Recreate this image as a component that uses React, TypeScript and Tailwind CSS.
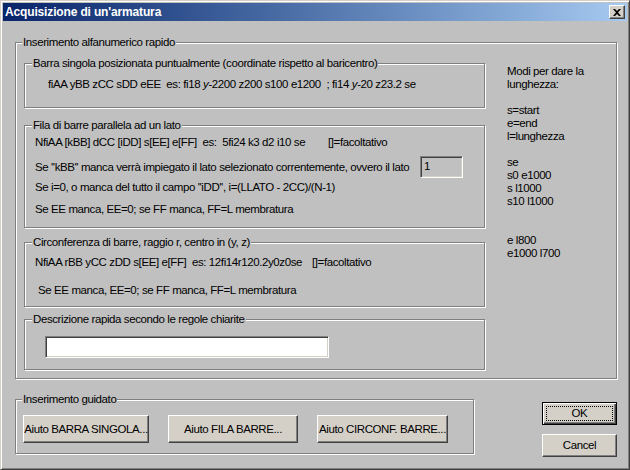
import React from "react";

const etched =
  "relative border border-[#808080] shadow-[1px_1px_0_#fff,inset_1px_1px_0_#fff]";
const raised =
  "border border-t-white border-l-white border-r-[#404040] border-b-[#404040] shadow-[inset_-1px_-1px_0_#808080] bg-[#d4d0c8]";
const sunken =
  "border border-t-[#808080] border-l-[#808080] border-r-white border-b-white shadow-[inset_1px_1px_0_#404040,inset_-1px_-1px_0_#d4d0c8]";

function Label({ children, left }: { children: React.ReactNode; left: string }) {
  return (
    <span
      className={`absolute top-[-8px] ${left} px-[1px] bg-[#c0c0c0] leading-[14px] whitespace-nowrap`}
    >
      {children}
    </span>
  );
}

function Line({ children, className = "" }: { children: React.ReactNode; className?: string }) {
  return <div className={`leading-[13px] h-[13px] whitespace-pre ${className}`}>{children}</div>;
}

export default function App() {
  const right = [
    "Modi per dare la",
    "lunghezza:",
    "",
    "s=start",
    "e=end",
    "l=lunghezza",
    "",
    "se",
    "s0 e1000",
    "s l1000",
    "s10 l1000",
    "",
    "",
    "e l800",
    "e1000 l700",
  ];
  return (
    <div className="w-[630px] h-[470px] bg-[#c0c0c0] border border-t-[#d4d0c8] border-l-[#d4d0c8] border-r-[#404040] border-b-[#404040] shadow-[inset_1px_1px_0_#fff,inset_-1px_-1px_0_#808080] p-[2px] flex flex-col text-black text-[11.5px] tracking-[-0.4px] font-['Liberation_Sans',Arial,sans-serif] overflow-hidden">
      {/* Title bar */}
      <div className="h-[18px] shrink-0 flex items-center justify-between bg-linear-to-r from-[#0a246a] to-[#a6caf0] pl-[2px] pr-[2px]">
        <span className="text-white font-bold text-[12px] tracking-[-0.15px] leading-[18px]">
          Acquisizione di un'armatura
        </span>
        <div className={`w-[16px] h-[14px] flex items-center justify-center ${raised}`}>
          <svg width="8" height="7" viewBox="0 0 8 7">
            <path d="M0 0h2l2 2 2-2h2L5 3.5 8 7H6L4 5 2 7H0l3-3.5z" fill="#000" />
          </svg>
        </div>
      </div>

      {/* Content */}
      <div className="flex flex-col pl-[12px] pt-[21px]">
        {/* Outer group */}
        <div className={`${etched} w-[602px] h-[337px] flex`}>
          <Label left="left-[6px]">Inserimento alfanumerico rapido</Label>
          <div className="flex flex-col pl-[8px] pt-[20px]">
            {/* Group 1 */}
            <div className={`${etched} w-[461px] h-[45px] pl-[23px] pt-[14px]`}>
              <Label left="left-[7px]">
                Barra singola posizionata puntualmente (coordinate rispetto al baricentro)
              </Label>
              <Line>{"fiAA yBB zCC sDD eEE  es: fi18 "}<i>y</i>{"-2200 z200 s100 e1200  ; fi14 "}<i>y</i>{"-20 z23.2 se"}</Line>
            </div>

            {/* Group 2 */}
            <div className={`${etched} w-[461px] h-[103px] mt-[17px] pl-[10px] pt-[10px]`}>
              <Label left="left-[7px]">Fila di barre parallela ad un lato</Label>
              <Line className="flex">
                <span className="w-[293px]">{"NfiAA [kBB] dCC [iDD] s[EE] e[FF]  es:  5fi24 k3 d2 i10 se"}</span>
                <span>[]=facoltativo</span>
              </Line>
              <div className="mt-[7px] h-[22px] flex items-center">
                <span className="w-[385px] whitespace-pre leading-[13px]">
                  {"Se ''kBB'' manca verrà impiegato il lato selezionato correntemente, ovvero il lato"}
                </span>
                <div className={`w-[43px] h-[22px] ${sunken} bg-[#c0c0c0] pl-[3px] leading-[18px]`}>1</div>
              </div>
              <Line className="mt-[3px]">{"Se i=0, o manca del tutto il campo ''iDD'', i=(LLATO - 2CC)/(N-1)"}</Line>
              <Line className="mt-[9px]">Se EE manca, EE=0; se FF manca, FF=L membratura</Line>
            </div>

            {/* Group 3 */}
            <div className={`${etched} w-[461px] h-[65px] mt-[14px] pl-[10px] pt-[13px]`}>
              <Label left="left-[7px]">Circonferenza di barre, raggio r, centro in (y, z)</Label>
              <Line className="flex">
                <span className="w-[277px]">{"NfiAA rBB yCC zDD s[EE] e[FF]  es: 12fi14r120.2y0z0se"}</span>
                <span>[]=facoltativo</span>
              </Line>
              <Line className="mt-[15px] pl-[3px]">Se EE manca, EE=0; se FF manca, FF=L membratura</Line>
            </div>

            {/* Group 4 */}
            <div className={`${etched} w-[461px] h-[51px] mt-[12px] pl-[20px] pt-[16px]`}>
              <Label left="left-[7px]">Descrizione rapida secondo le regole chiarite</Label>
              <div className={`w-[284px] h-[22px] bg-white ${sunken}`} />
            </div>
          </div>

          {/* Right column */}
          <div className="ml-[22px] pt-[22px] flex flex-col">
            {right.map((t, i) => (
              <Line key={i}>{t}</Line>
            ))}
          </div>
        </div>

        {/* Bottom row */}
        <div className="flex mt-[20px]">
          <div className={`${etched} w-[459px] h-[55px] flex gap-[19px] pl-[7px] pt-[15px]`}>
            <Label left="left-[6px]">Inserimento guidato</Label>
            <button className={`w-[126px] h-[28px] ${raised} leading-[13px] flex items-center justify-center whitespace-nowrap`}>
              Aiuto BARRA SINGOLA...
            </button>
            <button className={`w-[130px] h-[28px] ${raised} leading-[13px] flex items-center justify-center whitespace-nowrap`}>
              Aiuto FILA BARRE...
            </button>
            <button className={`w-[131px] h-[28px] ${raised} leading-[13px] flex items-center justify-center whitespace-nowrap`}>
              Aiuto CIRCONF. BARRE...
            </button>
          </div>
          <div className="ml-[68px] flex flex-col pt-[3px]">
            <button className="relative w-[75px] h-[23px] border border-black bg-[#d4d0c8] shadow-[inset_1px_1px_0_#fff,inset_-1px_-1px_0_#404040,inset_-2px_-2px_0_#808080] flex items-center justify-center leading-[13px]">
              <span className="absolute left-[3px] top-[3px] right-[3px] bottom-[3px] border border-dotted border-black" />
              OK
            </button>
            <button className={`mt-[9px] w-[75px] h-[23px] ${raised} flex items-center justify-center leading-[13px]`}>
              Cancel
            </button>
          </div>
        </div>
      </div>
    </div>
  );
}
